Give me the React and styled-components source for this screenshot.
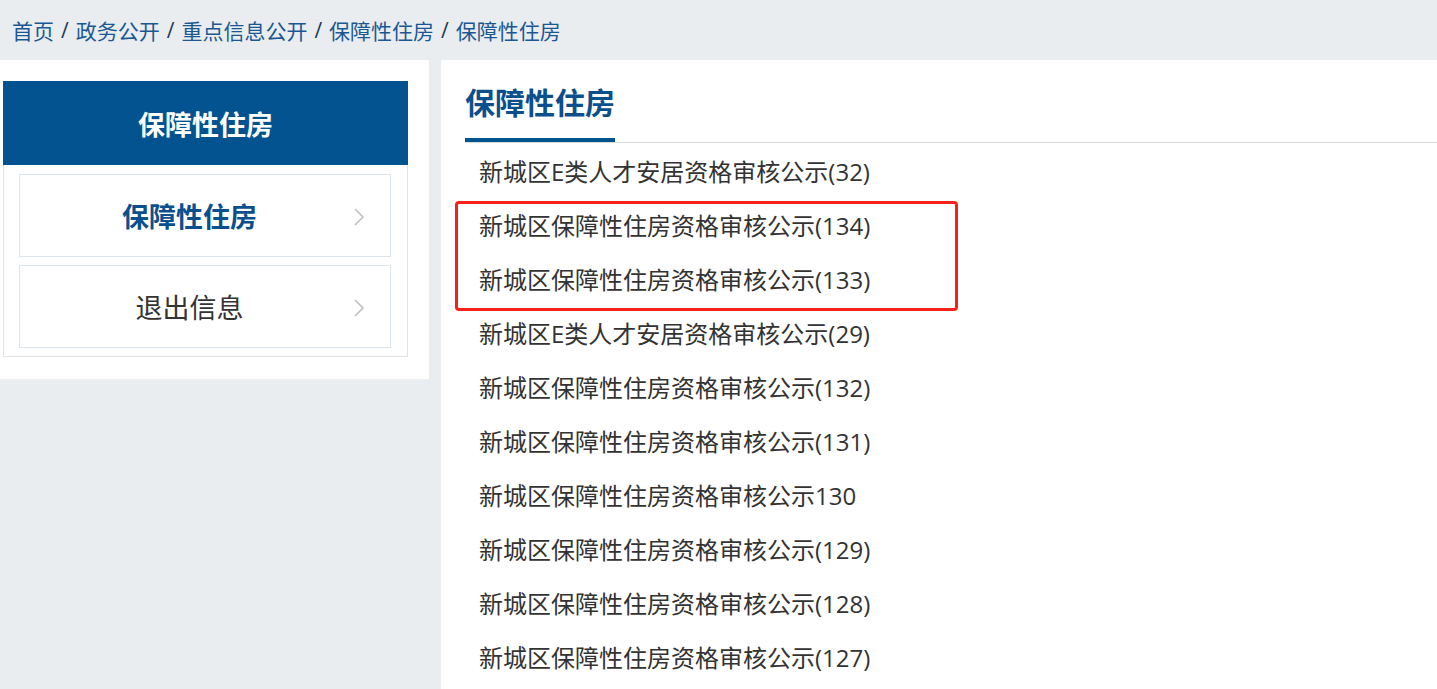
import React from "react";
import styled, { createGlobalStyle } from "styled-components";

const GlobalStyle = createGlobalStyle`
  html, body {
    margin: 0;
    padding: 0;
    background: #e9edef;
    font-family: "Open Sans", "Noto Sans CJK SC", sans-serif;
  }
`;

const crumbs = ["首页", "政务公开", "重点信息公开", "保障性住房", "保障性住房"];

const sideItems = [
  { label: "保障性住房", active: true },
  { label: "退出信息", active: false },
];

const articles = [
  "新城区E类人才安居资格审核公示(32)",
  "新城区保障性住房资格审核公示(134)",
  "新城区保障性住房资格审核公示(133)",
  "新城区E类人才安居资格审核公示(29)",
  "新城区保障性住房资格审核公示(132)",
  "新城区保障性住房资格审核公示(131)",
  "新城区保障性住房资格审核公示130",
  "新城区保障性住房资格审核公示(129)",
  "新城区保障性住房资格审核公示(128)",
  "新城区保障性住房资格审核公示(127)",
];

const Chevron = () => (
  <ChevronIcon width="10" height="18" viewBox="0 0 10 18">
    <path d="M1 1 L9 9 L1 17" fill="none" stroke="#b8bcc0" strokeWidth="1.5" />
  </ChevronIcon>
);

const App = () => {
  const first = articles.slice(0, 1);
  const marked = articles.slice(1, 3);
  const rest = articles.slice(3);

  return (
    <>
      <GlobalStyle />
      <Page>
        <Breadcrumb>
          {crumbs.map((c, i) => (
            <React.Fragment key={i}>
              {i > 0 && <Sep>/</Sep>}
              <CrumbLink>{c}</CrumbLink>
            </React.Fragment>
          ))}
        </Breadcrumb>
        <Main>
          <Sidebar>
            <SideHeader>保障性住房</SideHeader>
            <SideMenu>
              {sideItems.map((item) => (
                <SideItem key={item.label}>
                  <SideLabel $active={item.active}>{item.label}</SideLabel>
                  <Chevron />
                </SideItem>
              ))}
            </SideMenu>
          </Sidebar>
          <Content>
            <TitleBar>
              <Title>保障性住房</Title>
            </TitleBar>
            <List>
              {first.map((a, i) => (
                <Item key={"f" + i}>{a}</Item>
              ))}
              <Marked>
                {marked.map((a, i) => (
                  <Item key={"m" + i}>{a}</Item>
                ))}
              </Marked>
              {rest.map((a, i) => (
                <Item key={"r" + i}>{a}</Item>
              ))}
            </List>
          </Content>
        </Main>
      </Page>
    </>
  );
};

const Page = styled.div`
  min-height: 689px;
  overflow: hidden;
`;

const Breadcrumb = styled.nav`
  height: 60px;
  display: flex;
  align-items: center;
  padding-left: 12px;
  box-sizing: border-box;
  font-size: 21px;
  color: #1b5893;
`;

const CrumbLink = styled.span`
  color: #1b5893;
`;

const Sep = styled.span`
  margin: 0 7px;
  color: #1b3a5a;
`;

const Main = styled.div`
  display: flex;
  align-items: flex-start;
  gap: 12px;
`;

const Sidebar = styled.aside`
  width: 429px;
  flex-shrink: 0;
  background: #fff;
  box-sizing: border-box;
  padding: 21px 21px 22px 3px;
`;

const SideHeader = styled.div`
  height: 84px;
  background: #02538f;
  color: #fff;
  font-size: 27px;
  font-weight: 700;
  display: flex;
  align-items: center;
  justify-content: center;
`;

const SideMenu = styled.div`
  border: 1px solid #dfe4e8;
  border-top: none;
  padding: 9px 16px 8px 15px;
  display: flex;
  flex-direction: column;
  gap: 8px;
`;

const SideItem = styled.div`
  height: 83px;
  box-sizing: border-box;
  border: 1px solid #dde5ec;
  display: flex;
  align-items: center;
`;

const SideLabel = styled.span`
  flex: 1;
  text-align: center;
  padding-left: 9px;
  font-size: 27px;
  font-weight: ${(p) => (p.$active ? 700 : 400)};
  color: ${(p) => (p.$active ? "#0b4f8c" : "#333")};
`;

const ChevronIcon = styled.svg`
  margin: 2px 26px 0 4px;
  flex-shrink: 0;
`;

const Content = styled.section`
  flex: 1;
  background: #fff;
  min-height: 629px;
  padding-left: 24px;
`;

const TitleBar = styled.div`
  border-bottom: 1px solid #dadada;
`;

const Title = styled.h2`
  margin: 0;
  display: inline-flex;
  align-items: center;
  height: 74px;
  padding-top: 4px;
  border-bottom: 4px solid #02538f;
  font-size: 30px;
  font-weight: 700;
  color: #0b4f8c;
  width: 150px;
  white-space: nowrap;
`;

const List = styled.ul`
  list-style: none;
  margin: 0;
  padding: 2px 0 0 14px;
`;

const Marked = styled.div`
  position: relative;

  &::before {
    content: "";
    position: absolute;
    left: -24px;
    top: 2px;
    width: 503px;
    height: 110px;
    box-sizing: border-box;
    border: 3px solid #f3231b;
    border-radius: 4px;
    pointer-events: none;
  }
`;

const Item = styled.li`
  height: 54px;
  line-height: 54px;
  font-size: 24px;
  color: #333;
  white-space: nowrap;
`;

export default App;
